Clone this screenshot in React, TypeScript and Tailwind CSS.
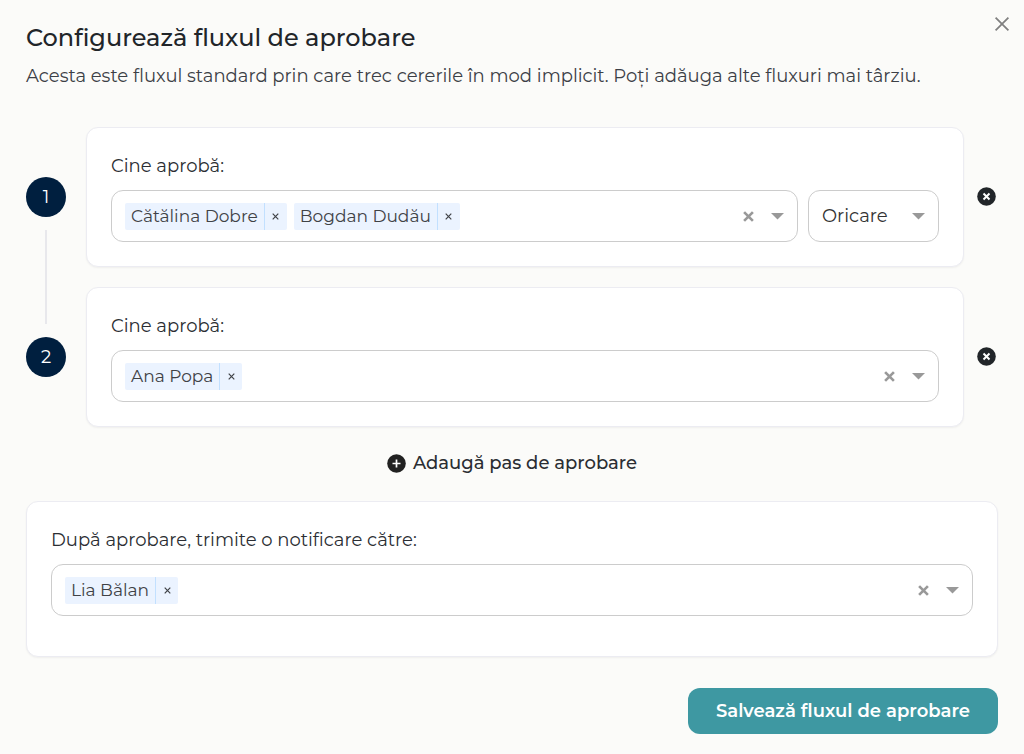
import { useState } from "react";
import clsx from "clsx";

type Step = { id: number; approvers: string[]; rule?: string };

const initialSteps: Step[] = [
  { id: 1, approvers: ["Cătălina Dobre", "Bogdan Dudău"], rule: "Oricare" },
  { id: 2, approvers: ["Ana Popa"] },
];

function CrossIcon({ className, strokeWidth }: { className: string; strokeWidth: number }) {
  return (
    <svg aria-hidden="true" className={className} fill="none" stroke="currentColor" strokeWidth={strokeWidth} viewBox="0 0 10 10">
      <path d="M1 1l8 8M9 1L1 9" />
    </svg>
  );
}

function ArrowIcon({ className }: { className?: string }) {
  return (
    <svg aria-hidden="true" className={clsx("h-[7px] w-[13px] flex-none text-[#999999]", className)} fill="currentColor" viewBox="0 0 13 7">
      <path d="M0 0h13L6.5 6.5z" />
    </svg>
  );
}

function PersonChip({ name, onRemove }: { name: string; onRemove: () => void }) {
  return (
    <span className="flex h-[27px] overflow-hidden rounded-xs bg-[#ebf3ff] text-[#3f4246]">
      <span className="border-r border-[#c2e0ff] px-1.5 text-[17px] leading-[27px] whitespace-nowrap">{name}</span>
      <button aria-label={`Elimină ${name}`} className="flex w-[22px] items-center justify-center" onClick={onRemove} type="button">
        <CrossIcon className="size-[7px]" strokeWidth={1.7} />
      </button>
    </span>
  );
}

function PeopleSelect({ id, people, onChange }: { id: string; people: string[]; onChange: (people: string[]) => void }) {
  return (
    <div className="flex h-[52px] min-w-0 flex-1 items-center gap-[7px] rounded-xl border border-[#cccccc] bg-white px-[13px]">
      {people.map((name) => (
        <PersonChip key={name} name={name} onRemove={() => onChange(people.filter((p) => p !== name))} />
      ))}
      <input className="min-w-0 flex-1 text-[17px] outline-none" id={id} role="combobox" aria-expanded={false} type="text" />
      <button aria-label="Șterge tot" className="mr-2.5 text-[#999999]" onClick={() => onChange([])} type="button">
        <CrossIcon className="size-[11px]" strokeWidth={2.4} />
      </button>
      <button aria-label="Deschide lista" type="button">
        <ArrowIcon />
      </button>
    </div>
  );
}

function RuleSelect({ value, onChange }: { value: string; onChange: (value: string) => void }) {
  return (
    <div className="relative w-[131px] flex-none">
      <select
        aria-label="Regulă de aprobare"
        className="h-[52px] w-full appearance-none rounded-xl border border-[#cccccc] bg-white px-[13px] text-lg text-[#333333] outline-none"
        onChange={(e) => onChange(e.target.value)}
        value={value}
      >
        <option>Oricare</option>
        <option>Toți</option>
      </select>
      <ArrowIcon className="pointer-events-none absolute top-[23px] right-[14px]" />
    </div>
  );
}

function StepMarker({ number, first, last }: { number: number; first: boolean; last: boolean }) {
  return (
    <div className="flex w-10 flex-none flex-col items-center">
      <div className="flex-1 pb-[13px]">{!first && <div className="h-full w-0.5 bg-[#e8e8ec]" />}</div>
      <div className="flex size-10 items-center justify-center rounded-full bg-[#001f3f] text-lg text-white">{number}</div>
      <div className="flex-1 pt-[13px]">{!last && <div className="h-full w-0.5 bg-[#e8e8ec]" />}</div>
    </div>
  );
}

export default function App() {
  const [steps, setSteps] = useState(initialSteps);
  const [notified, setNotified] = useState(["Lia Bălan"]);

  const updateStep = (id: number, patch: Partial<Step>) =>
    setSteps((current) => current.map((step) => (step.id === id ? { ...step, ...patch } : step)));

  return (
    <main className="min-h-screen bg-[#fbfbf9] px-[26px] pt-5 pb-5 font-[Montserrat,Inter,sans-serif] text-[#2b2e33]">
      {/* Header */}
      <header className="relative">
        <h1 className="text-2xl leading-9 font-medium text-[#212529]">Configurează fluxul de aprobare</h1>
        <p className="mt-1.5 text-lg leading-7 text-[#3c4046]">
          Acesta este fluxul standard prin care trec cererile în mod implicit. Poți adăuga alte fluxuri mai târziu.
        </p>
        <button aria-label="Închide" className="absolute -top-1 -right-3 text-[#808080]" type="button">
          <CrossIcon className="size-4" strokeWidth={1.1} />
        </button>
      </header>

      {/* Approval steps */}
      <ol className="mt-[27px]">
        {steps.map((step, index) => (
          <li key={step.id} className="flex">
            <StepMarker first={index === 0} last={index === steps.length - 1} number={index + 1} />
            <div className="min-w-0 flex-1 py-2.5 pr-3 pl-5">
              <section className="rounded-xl border border-[#ececf2] bg-white p-6 shadow-xs">
                <label className="mb-2.5 block text-lg leading-7" htmlFor={`approvers-${step.id}`}>
                  Cine aprobă:
                </label>
                <div className="flex gap-2.5">
                  <PeopleSelect
                    id={`approvers-${step.id}`}
                    onChange={(approvers) => updateStep(step.id, { approvers })}
                    people={step.approvers}
                  />
                  {step.rule && <RuleSelect onChange={(rule) => updateStep(step.id, { rule })} value={step.rule} />}
                </div>
              </section>
            </div>
            <button
              aria-label={`Elimină pasul ${index + 1}`}
              className="w-[22px] flex-none self-center text-[#212529]"
              onClick={() => setSteps((current) => current.filter((s) => s.id !== step.id))}
              type="button"
            >
              <svg aria-hidden="true" className="size-5" viewBox="0 0 20 20">
                <circle cx="10.5" cy="9.5" fill="currentColor" r="9.3" />
                <path d="M7.5 6.5l6 6M13.5 6.5l-6 6" stroke="white" strokeWidth="2" />
              </svg>
            </button>
          </li>
        ))}
      </ol>

      <button
        className="mx-auto mt-3 flex items-center gap-[7px] text-lg leading-7 font-medium"
        onClick={() => setSteps((current) => [...current, { id: Date.now(), approvers: [] }])}
        type="button"
      >
        <svg aria-hidden="true" className="size-[19px] text-[#212121]" viewBox="0 0 19 19">
          <circle cx="9.5" cy="9.5" fill="currentColor" r="9.3" />
          <path d="M9.5 5.5v8M5.5 9.5h8" stroke="white" strokeWidth="1.7" />
        </svg>
        Adaugă pas de aprobare
      </button>

      {/* Notification */}
      <section className="mt-6 rounded-xl border border-[#ececf2] bg-white px-6 pt-6 pb-10 shadow-xs">
        <label className="mb-2.5 block text-lg leading-7" htmlFor="notified">
          După aprobare, trimite o notificare către:
        </label>
        <div className="flex">
          <PeopleSelect id="notified" onChange={setNotified} people={notified} />
        </div>
      </section>

      <div className="mt-[31px] flex justify-end">
        <button className="h-[46px] rounded-xl bg-[#3e98a2] px-7 text-lg font-semibold text-white" type="button">
          Salvează fluxul de aprobare
        </button>
      </div>
    </main>
  );
}
